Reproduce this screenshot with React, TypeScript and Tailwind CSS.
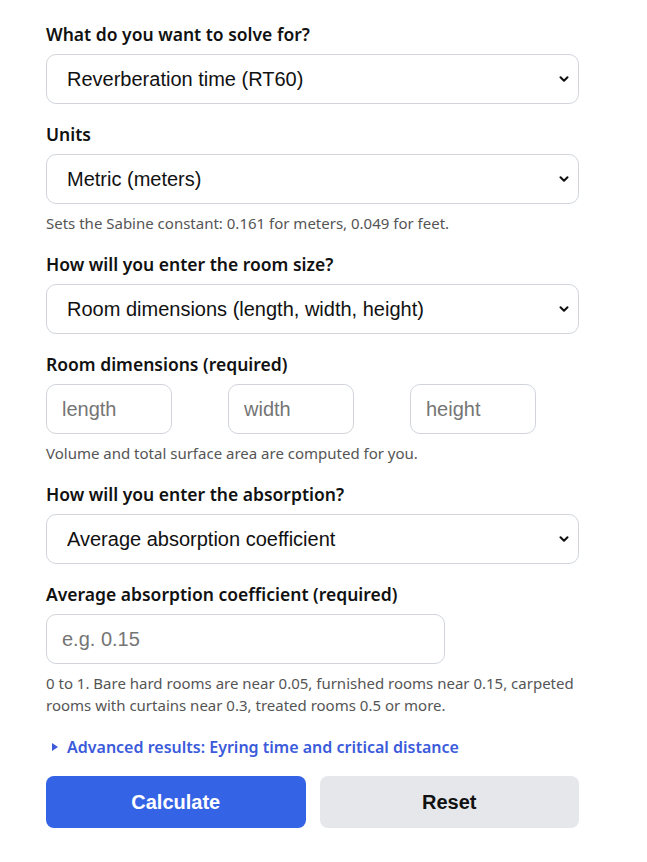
import { ChevronDown } from "lucide-react";

type SelectProps = {
  value: string;
  options: string[];
};

function Select({ value, options }: SelectProps) {
  return (
    <div className="relative w-[533px]">
      <select
        defaultValue={value}
        className="h-[50px] w-full appearance-none rounded-[10px] border border-[#d1d5db] bg-white pl-5 pr-10 font-['Liberation_Sans',Arial,sans-serif] text-[20px] text-[#111] outline-none"
      >
        {options.map((o) => (
          <option key={o}>{o}</option>
        ))}
      </select>
      <ChevronDown
        className="pointer-events-none absolute right-[8px] top-1/2 h-[14px] w-[14px] -translate-y-1/2 text-[#111]"
        strokeWidth={3.5}
      />
    </div>
  );
}

function Label({ children }: { children: React.ReactNode }) {
  return (
    <label className="mb-2 block text-[17.5px] font-semibold leading-6 text-[#111]">
      {children}
    </label>
  );
}

function Help({ children }: { children: React.ReactNode }) {
  return (
    <p className="mt-[8px] text-[15px] leading-[22px] text-[#555]">{children}</p>
  );
}

const inputCls =
  "h-[50px] rounded-[10px] border border-[#d1d5db] bg-white px-[15px] font-['Liberation_Sans',Arial,sans-serif] text-[20px] text-[#111] outline-none placeholder:text-[#757575]";

export default function App() {
  return (
    <div className="min-h-screen bg-white font-['Noto_Sans','Open_Sans',sans-serif]">
      <form className="flex flex-col gap-[18px] px-[46px] pt-[22px]">
        <div>
          <Label>What do you want to solve for?</Label>
          <Select
            value="Reverberation time (RT60)"
            options={["Reverberation time (RT60)", "Room volume", "Absorption"]}
          />
        </div>

        <div>
          <Label>Units</Label>
          <Select
            value="Metric (meters)"
            options={["Metric (meters)", "Imperial (feet)"]}
          />
          <Help>Sets the Sabine constant: 0.161 for meters, 0.049 for feet.</Help>
        </div>

        <div>
          <Label>How will you enter the room size?</Label>
          <Select
            value="Room dimensions (length, width, height)"
            options={["Room dimensions (length, width, height)", "Volume and surface area"]}
          />
        </div>

        <div>
          <Label>Room dimensions (required)</Label>
          <div className="flex gap-[56px]">
            <input placeholder="length" className={`${inputCls} w-[126px]`} />
            <input placeholder="width" className={`${inputCls} w-[126px]`} />
            <input placeholder="height" className={`${inputCls} w-[126px]`} />
          </div>
          <Help>Volume and total surface area are computed for you.</Help>
        </div>

        <div>
          <Label>How will you enter the absorption?</Label>
          <Select
            value="Average absorption coefficient"
            options={["Average absorption coefficient", "Total absorption (sabins)"]}
          />
        </div>

        <div>
          <Label>Average absorption coefficient (required)</Label>
          <input placeholder="e.g. 0.15" className={`${inputCls} w-[399px]`} />
          <Help>
            0 to 1. Bare hard rooms are near 0.05, furnished rooms near 0.15, carpeted
            rooms with curtains near 0.3, treated rooms 0.5 or more.
          </Help>
        </div>

        <details className="mt-[1px] w-[533px]">
          <summary className="flex cursor-pointer list-none items-center gap-[9px] pl-[6px] text-[16px] font-semibold leading-6 text-[#3b5bdb] [&::-webkit-details-marker]:hidden">
            <span className="h-0 w-0 border-y-[4px] border-l-[6px] border-y-transparent border-l-[#3b5bdb]" />
            Advanced results: Eyring time and critical distance
          </summary>
        </details>

        <div className="-mt-[1px] flex w-[533px] gap-[14px]">
          <button
            type="button"
            className="h-[52px] flex-1 rounded-[8px] bg-[#3563e6] font-['Liberation_Sans',Arial,sans-serif] text-[20px] font-bold text-white"
          >
            Calculate
          </button>
          <button
            type="reset"
            className="h-[52px] flex-1 rounded-[8px] bg-[#e5e7eb] font-['Liberation_Sans',Arial,sans-serif] text-[20px] font-bold text-[#111]"
          >
            Reset
          </button>
        </div>
      </form>
    </div>
  );
}
